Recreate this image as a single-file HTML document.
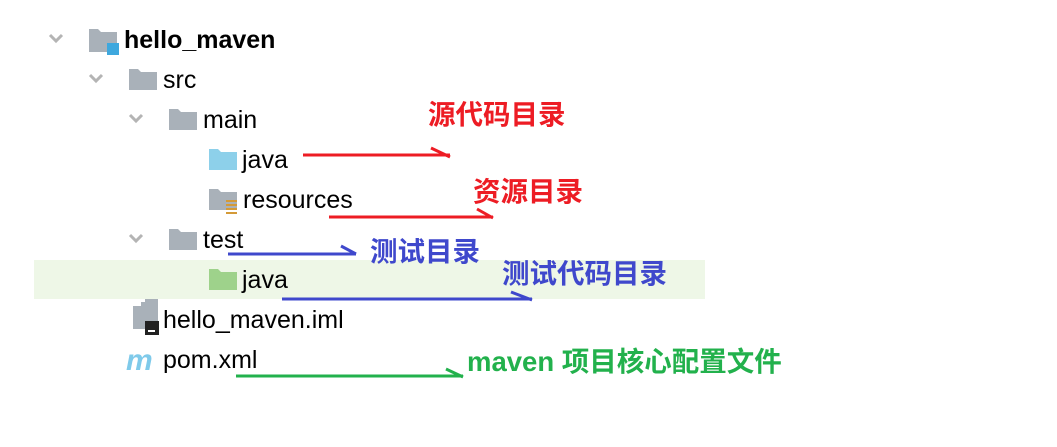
<!DOCTYPE html>
<html><head><meta charset="utf-8"><style>
body{margin:0;width:1057px;height:447px;background:#fff;position:relative;overflow:hidden;font-family:"Segoe UI","Liberation Sans","Noto Sans CJK SC",sans-serif}
.t{position:absolute;font-size:25px;color:#000;line-height:28px;white-space:nowrap}
.l{position:absolute;font-weight:bold;font-size:27.5px;line-height:30px;white-space:nowrap;font-family:"Liberation Sans","Noto Sans CJK SC",sans-serif}
svg{position:absolute;left:0;top:0}
</style></head><body>
<div style="position:absolute;left:34px;top:260px;width:671px;height:39px;background:#eef7e7"></div>
<svg width="1057" height="447">
<g fill="none" stroke="#b4b4b4" stroke-width="3">
<path d="M50 35l6 6 6-6"/><path d="M90 75l6 6 6-6"/><path d="M130 115l6 6 6-6"/><path d="M130 235l6 6 6-6"/>
</g>
<g fill="#a9b1b9">
<path d="M89 29h9l3 3h16v20h-28z"/>
<path d="M129 69h9l3 3h16v18h-28z"/>
<path d="M169 109h9l3 3h16v18h-28z"/>
<path d="M169 229h9l3 3h16v18h-28z"/>
<path d="M209 189h9l3 3h16v18h-28z"/>
<path d="M133 306h8v-4h4v-3h13v30h-25z"/>
</g>
<rect x="107" y="43" width="12" height="12" fill="#3ea8de"/>
<path d="M209 149h9l3 3h16v18h-28z" fill="#8dd0ea"/>
<path d="M209 269h9l3 3h16v18h-28z" fill="#9ed28b"/>
<g fill="#d49a38"><rect x="226" y="200" width="11" height="2"/><rect x="226" y="204" width="11" height="2"/><rect x="226" y="208" width="11" height="2"/><rect x="226" y="212" width="11" height="2"/></g>
<rect x="145" y="321" width="14" height="14" fill="#222"/><rect x="148" y="330" width="7" height="2" fill="#fff"/>
<text x="126" y="370" font-family="Liberation Sans,sans-serif" font-size="30" font-weight="bold" font-style="italic" fill="#7fcaea">m</text>
<g fill="none" stroke-width="3">
<path d="M303 155H450M431 148l19 9" stroke="#ed1c24"/>
<path d="M329 217H493M477 209l16 9" stroke="#ed1c24"/>
<path d="M228 254H356M341 246l15 8" stroke="#3f48cc"/>
<path d="M282 299H532M511 292l21 8" stroke="#3f48cc"/>
<path d="M236 376H463M446 369l17 8" stroke="#22b14c"/>
</g>
</svg>
<div class="t" style="left:124px;top:26px;font-weight:bold">hello_maven</div>
<div class="t" style="left:163px;top:66px">src</div>
<div class="t" style="left:203px;top:106px">main</div>
<div class="t" style="left:242px;top:146px">java</div>
<div class="t" style="left:243px;top:186px">resources</div>
<div class="t" style="left:203px;top:226px">test</div>
<div class="t" style="left:242px;top:266px">java</div>
<div class="t" style="left:163px;top:306px">hello_maven.iml</div>
<div class="t" style="left:163px;top:346px">pom.xml</div>
<div class="l" style="left:428px;top:100px;color:#ed1c24">源代码目录</div>
<div class="l" style="left:473px;top:177px;color:#ed1c24">资源目录</div>
<div class="l" style="left:370px;top:237px;color:#3f48cc">测试目录</div>
<div class="l" style="left:502px;top:259px;color:#3f48cc">测试代码目录</div>
<div class="l" style="left:467px;top:347px;color:#22b14c">maven 项目核心配置文件</div>
</body></html>
